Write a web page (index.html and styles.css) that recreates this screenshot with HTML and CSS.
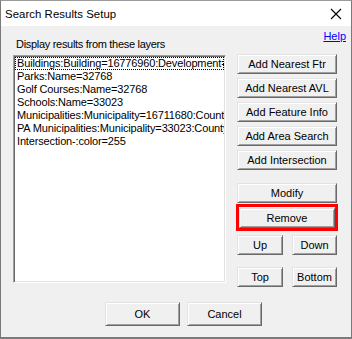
FILE: index.html
```html
<!DOCTYPE html>
<html>
<head>
<meta charset="utf-8">
<link rel="stylesheet" href="styles.css">
</head>
<body>
<div class="window">
  <div class="titlebar">
    <span class="title">Search Results Setup</span>
    <svg class="close" width="12" height="12" viewBox="0 0 12 12"><path d="M1 1 L11 11 M11 1 L1 11" stroke="#000" stroke-width="1.1" fill="none"/></svg>
  </div>
  <div class="client">
    <div class="header">
      <span class="label">Display results from these layers</span>
      <a class="help">Help</a>
    </div>
    <div class="main">
      <div class="listbox">
        <div class="item focus">Buildings:Building=16776960:Development=Name</div>
        <div class="item">Parks:Name=32768</div>
        <div class="item">Golf Courses:Name=32768</div>
        <div class="item">Schools:Name=33023</div>
        <div class="item">Municipalities:Municipality=16711680:County=Name</div>
        <div class="item">PA Municipalities:Municipality=33023:County=Name</div>
        <div class="item">Intersection-:color=255</div>
      </div>
      <div class="buttons">
        <div class="btn add">Add Nearest Ftr</div>
        <div class="btn add">Add Nearest AVL</div>
        <div class="btn add">Add Feature Info</div>
        <div class="btn add">Add Area Search</div>
        <div class="btn add">Add Intersection</div>
        <div class="btn modify">Modify</div>
        <div class="highlight"><div class="btn remove">Remove</div></div>
        <div class="pair first">
          <div class="btn small up">Up</div>
          <div class="btn small">Down</div>
        </div>
        <div class="pair second">
          <div class="btn small up">Top</div>
          <div class="btn small">Bottom</div>
        </div>
      </div>
    </div>
    <div class="footer">
      <div class="btn big">OK</div>
      <div class="btn big">Cancel</div>
    </div>
  </div>
</div>
</body>
</html>
```
FILE: styles.css
```css
html, body {
  margin: 0;
  padding: 0;
  background: #7d7d7d;
}
.window {
  width: 352px;
  height: 338px;
  box-sizing: border-box;
  border: 1px solid #7a7a7a;
  border-top-color: #9a9a9a;
  background: #f0f0f0;
  display: flex;
  flex-direction: column;
  font-family: "Liberation Sans", Arial, sans-serif;
  font-size: 11px;
  color: #000;
}
.titlebar {
  height: 25px;
  background: #fff;
  display: flex;
  align-items: center;
  justify-content: space-between;
  padding: 0 9px 0 4px;
}
.title {
  font-size: 11.4px;
  letter-spacing: 0.05px;
  margin-top: 1px;
}
.close {
  display: block;
  margin-top: 1px;
}
.client {
  padding: 4px 14px 0 12px;
  display: flex;
  flex-direction: column;
}
.header {
  display: flex;
  justify-content: space-between;
  align-items: flex-start;
  height: 25px;
}
.label {
  margin-top: 8px;
  line-height: 13px;
  letter-spacing: -0.3px;
  padding-left: 3px;
}
.help {
  line-height: 13px;
  color: #0000ff;
  text-decoration: underline;
  margin-right: -9px;
}
.main {
  display: flex;
  align-items: flex-start;
  height: 228px;
}
.listbox {
  width: 213px;
  height: 228px;
  box-sizing: border-box;
  background: #fff;
  border: 1px solid;
  border-color: #a0a0a0 #fff #fff #a0a0a0;
  box-shadow: inset 1px 1px 0 #696969, inset -1px -1px 0 #e3e3e3;
  padding: 1px 1px 1px 1px;
  overflow: hidden;
}
.item {
  height: 13px;
  line-height: 13px;
  white-space: nowrap;
  overflow: hidden;
  padding-left: 2px;
  letter-spacing: -0.15px;
}
.focus {
  outline: 1px dotted #000;
  outline-offset: -1px;
}
.buttons {
  width: 100px;
  margin-left: 11px;
  margin-top: -1px;
  display: flex;
  flex-direction: column;
}
.btn {
  box-sizing: border-box;
  height: 20px;
  background: #f0f0f0;
  border: 1px solid;
  border-color: #e3e3e3 #696969 #696969 #e3e3e3;
  box-shadow: inset 1px 1px 0 #fff, inset -1px -1px 0 #a0a0a0;
  display: flex;
  align-items: center;
  justify-content: center;
  white-space: nowrap;
  padding-bottom: 1px;
}
.add {
  margin-bottom: 4px;
}
.modify {
  margin-top: 9px;
}
.highlight {
  margin: 1px -1px 0 -1px;
  border: 3px solid #ff0000;
  padding: 1px 0 0 0;
}
.remove {
  height: 20px;
}
.pair {
  display: flex;
  justify-content: space-between;
}
.first {
  margin-top: 4px;
}
.second {
  margin-top: 12px;
}
.small {
  width: 45px;
}
.up {
  width: 46px;
}
.footer {
  display: flex;
  gap: 7px;
  margin-top: 19px;
  padding-left: 92px;
}
.big {
  width: 75px;
  height: 24px;
}
```
